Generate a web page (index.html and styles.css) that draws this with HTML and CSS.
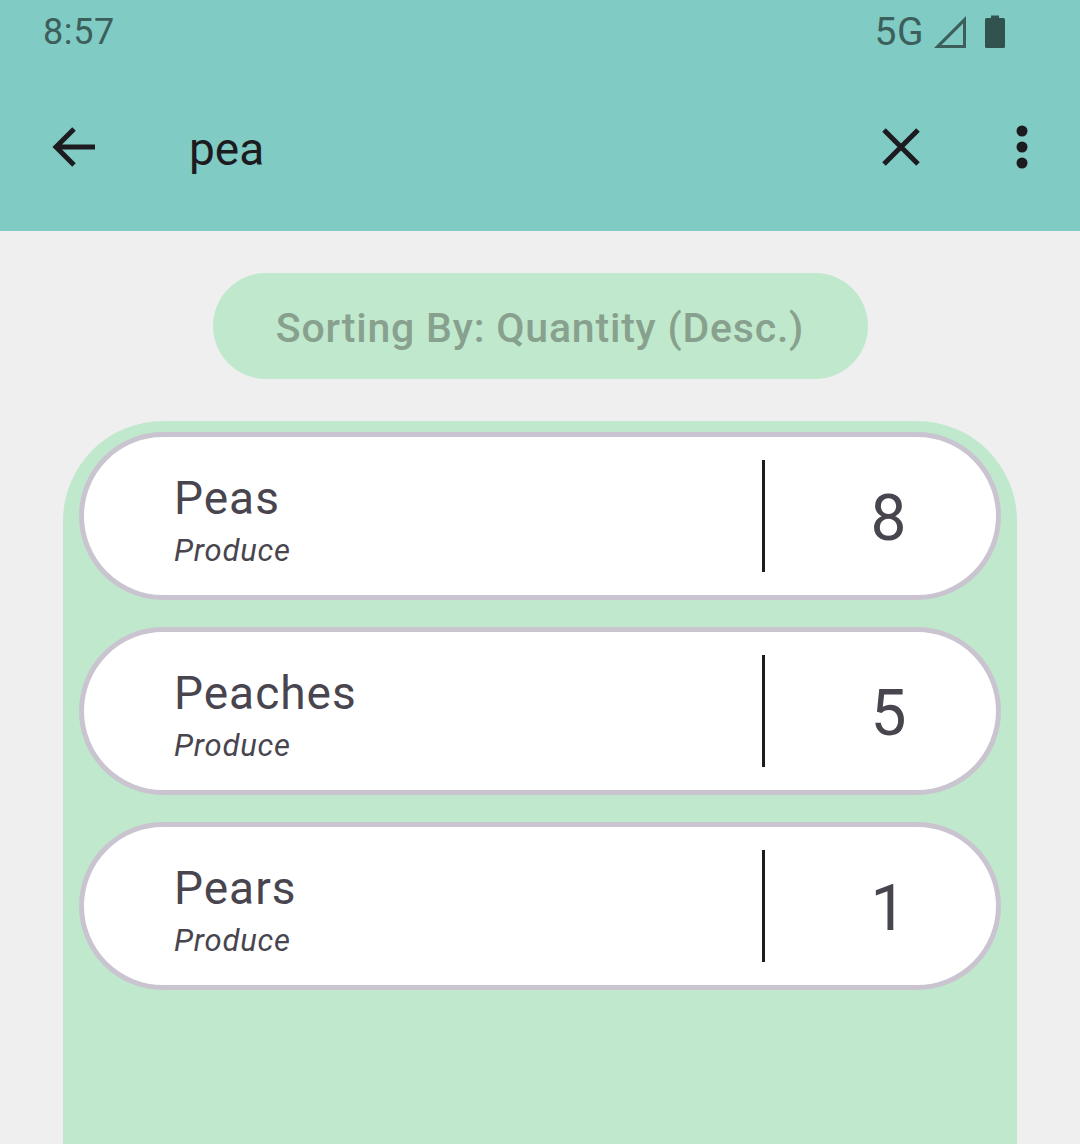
FILE: index.html
```html
<!DOCTYPE html>
<html lang="en">
<head>
  <meta charset="UTF-8" />
  <meta name="viewport" content="width=device-width, initial-scale=1.0"/>
  <title>Pantry Search</title>
  <link rel="stylesheet" href="styles.css">
</head>
<body>

  <header class="header">
    <div class="status-bar">
      <span class="clock">8:57</span>
      <div class="status-icons">
        <span class="network">5G</span>
        <svg class="signal" width="32" height="32" viewBox="0 0 32 32">
          <path d="M32 0V32H0Z M29 7.500L7.500 29H29Z" fill="#3c5f5c" fill-rule="evenodd"/>
        </svg>
        <svg class="battery" width="22" height="34" viewBox="0 0 22 34">
          <path d="M7 0.500H15V3H19.500Q21 3 21 5V31.500Q21 33 19.500 33H2.500Q1 33 1 31.500V5Q1 3 2.500 3H7Z" fill="#31524f"/>
        </svg>
      </div>
    </div>
    <div class="toolbar">
      <svg class="back" width="46" height="42" viewBox="0 0 46 42">
        <path d="M44 21H5M23 3L5 21L23 39" fill="none" stroke="#1c1b1f" stroke-width="5"/>
      </svg>
      <span class="query">pea</span>
      <svg class="clear" width="38" height="38" viewBox="0 0 38 38">
        <path d="M2 2L36 36M36 2L2 36" fill="none" stroke="#1c1b1f" stroke-width="5"/>
      </svg>
      <svg class="more" width="12" height="44" viewBox="0 0 12 44">
        <circle cx="6" cy="6" r="5.500" fill="#1c1b1f"/>
        <circle cx="6" cy="22" r="5.500" fill="#1c1b1f"/>
        <circle cx="6" cy="38" r="5.500" fill="#1c1b1f"/>
      </svg>
    </div>
  </header>

  <main class="content">
    <div class="sort-pill">Sorting By: Quantity (Desc.)</div>

    <section class="panel">
      <div class="item">
        <div class="item-info">
          <div class="item-name">Peas</div>
          <div class="item-category">Produce</div>
        </div>
        <div class="item-divider"></div>
        <div class="item-qty">8</div>
      </div>
      <div class="item">
        <div class="item-info">
          <div class="item-name">Peaches</div>
          <div class="item-category">Produce</div>
        </div>
        <div class="item-divider"></div>
        <div class="item-qty">5</div>
      </div>
      <div class="item">
        <div class="item-info">
          <div class="item-name">Pears</div>
          <div class="item-category">Produce</div>
        </div>
        <div class="item-divider"></div>
        <div class="item-qty">1</div>
      </div>
    </section>
  </main>

</body>
</html>
```

FILE: styles.css
```css
html, body {
  height: 100%;
}

body {
  margin: 0;
  height: 1144px;
  overflow: hidden;
  background-color: #efefef;
  font-family: Roboto, "Liberation Sans", sans-serif;
}

.header {
  height: 231px;
  background: #80cbc4;
  box-sizing: border-box;
}

.status-bar {
  height: 63px;
  display: flex;
  align-items: center;
  justify-content: space-between;
  padding: 0 74px 0 43px;
  color: #3c5f5c;
}

.clock {
  font-size: 36px;
  letter-spacing: 0.6px;
}

.status-icons {
  display: flex;
  align-items: center;
}

.network {
  font-size: 39px;
  letter-spacing: 0.5px;
  margin-right: 10px;
}

.signal {
  margin-right: 18px;
}

.toolbar {
  height: 168px;
  display: flex;
  align-items: center;
  padding-left: 51px;
}

.back {
  flex-shrink: 0;
}

.query {
  font-size: 46px;
  color: #1c1b1f;
  margin-left: 92px;
  padding-top: 4px;
  flex: 1;
}

.clear {
  margin-right: 96px;
}

.more {
  margin-right: 52px;
}

.content {
  display: flex;
  flex-direction: column;
  align-items: center;
  padding-top: 42px;
}

.sort-pill {
  width: 655px;
  height: 106px;
  box-sizing: border-box;
  padding-top: 4px;
  border-radius: 53px;
  background: #c0e8cd;
  color: #88a18e;
  font-size: 41px;
  font-weight: 500;
  letter-spacing: 0.8px;
  display: flex;
  align-items: center;
  justify-content: center;
}

.panel {
  width: 954px;
  height: 723px;
  margin-top: 42px;
  box-sizing: border-box;
  padding: 11px 16px;
  background: #c0e8cd;
  border-radius: 100px 100px 0 0;
  display: flex;
  flex-direction: column;
  gap: 27px;
}

.item {
  height: 168px;
  box-sizing: border-box;
  background: white;
  border: 5px solid #cac4d0;
  border-radius: 84px;
  display: flex;
  align-items: center;
  padding-left: 90px;
  color: #49454f;
}

.item-info {
  flex: 1;
  margin-top: 9px;
}

.item-name {
  font-size: 46px;
  letter-spacing: 1px;
  line-height: 54px;
}

.item-category {
  font-size: 31px;
  font-style: italic;
  letter-spacing: 0.8px;
  line-height: 38px;
  margin-top: 7px;
}

.item-divider {
  width: 3px;
  height: 112px;
  background: #1c1b1f;
}

.item-qty {
  width: 231px;
  box-sizing: border-box;
  padding: 4px 0 0 16px;
  text-align: center;
  font-size: 64px;
}
```
